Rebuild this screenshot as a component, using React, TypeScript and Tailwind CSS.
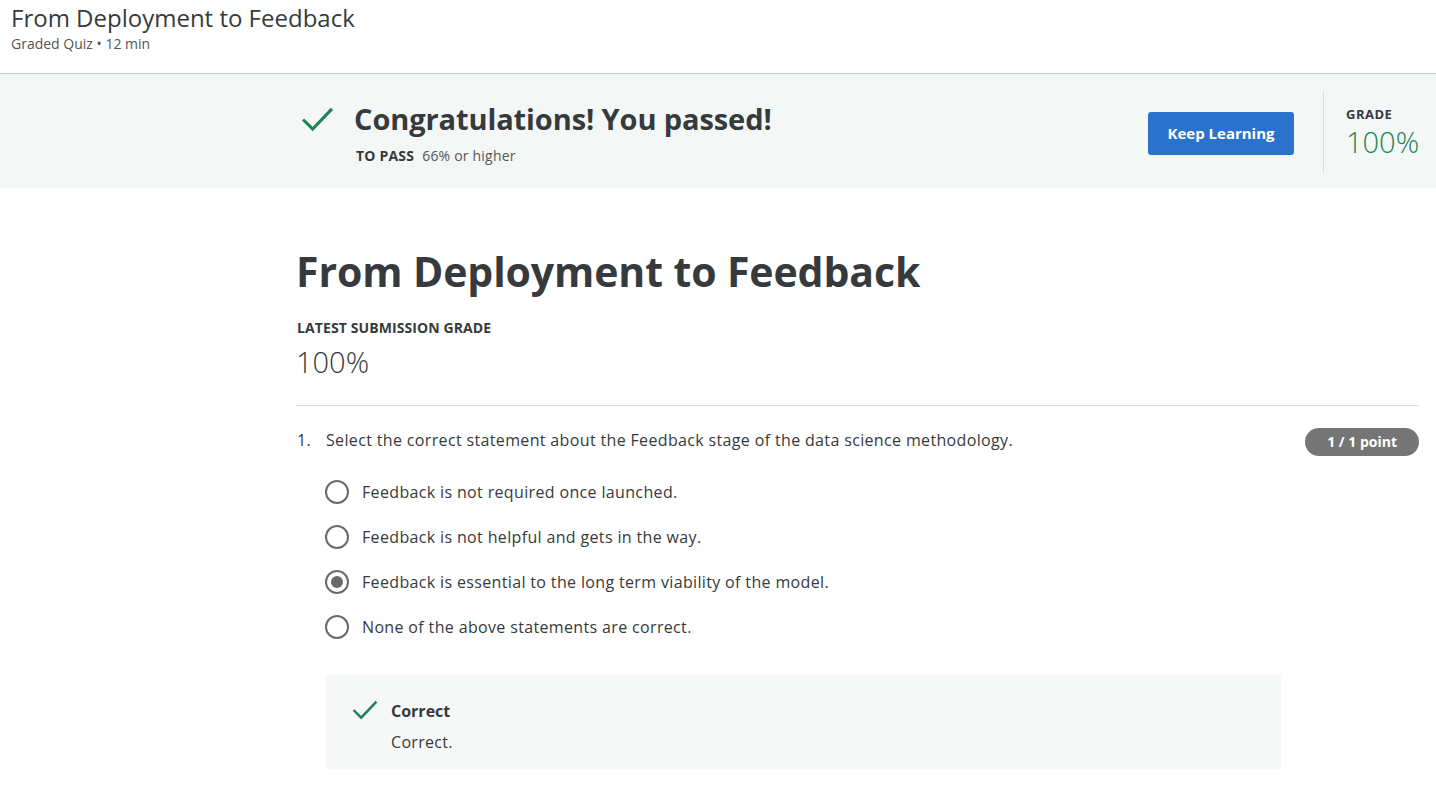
const options = [
  "Feedback is not required once launched.",
  "Feedback is not helpful and gets in the way.",
  "Feedback is essential to the long term viability of the model.",
  "None of the above statements are correct.",
];

const CheckMark = ({ className }: { className?: string }) => (
  <svg viewBox="0 0 34 26" className={className} fill="none">
    <path d="M2 13 L12 23 L32 2" stroke="#1f8354" strokeWidth="3.2" />
  </svg>
);

export default function App() {
  return (
    <div className="min-h-[806px] bg-white text-[#373a3c] font-['Open_Sans',sans-serif]">
      {/* header */}
      <div className="h-[74px] border-b border-[#c8c8c8] pl-[11px] pt-[2px]">
        <h1 className="text-[24px] leading-[32px] text-[#373a3c]">From Deployment to Feedback</h1>
        <div className="text-[14px] leading-[18px] text-[#555] mt-[1px]">Graded Quiz • 12 min</div>
      </div>

      {/* banner */}
      <div className="h-[114px] bg-[#f3f8f6] flex items-center pl-[301px] pr-[17px] pt-[5px]">
        <div className="flex flex-1 items-start -mt-[3px]">
          <CheckMark className="w-[33px] h-[25px] mt-[8px]" />
          <div className="ml-[20px]">
            <div className="text-[29px] font-bold leading-[40px] text-[#373a3c] tracking-[-0.1px]">Congratulations! You passed!</div>
            <div className="mt-[6px] flex items-baseline gap-[8px] pl-[2px]">
              <span className="text-[14px] font-bold leading-[20px] tracking-[0.2px]">TO PASS</span>
              <span className="text-[14px] text-[#555] tracking-[0.2px]">66% or higher</span>
            </div>
          </div>
        </div>
        <button className="w-[146px] h-[43px] rounded-[3px] bg-[#2a73cc] text-white text-[15px] font-bold">
          Keep Learning
        </button>
        <div className="ml-[29px] w-px h-[82px] bg-[#dcdcdc] -mt-[4px]" />
        <div className="ml-[22px] -mt-[2px] w-[73px]">
          <div className="text-[13px] font-bold tracking-[0.5px] leading-[18px]">GRADE</div>
          <div className="text-[29px] leading-[38px] font-light text-[#1f8354]">100%</div>
        </div>
      </div>

      {/* content */}
      <div className="ml-[296px] mr-[17px] pt-[56px]">
        <h2 className="text-[41px] font-bold leading-[54px] text-[#373a3c] tracking-[-0.1px]">From Deployment to Feedback</h2>
        <div className="mt-[21px] text-[14px] font-bold leading-[18px] pl-[1px] tracking-[0.1px]">LATEST SUBMISSION GRADE</div>
        <div className="mt-[6px] text-[29px] font-light leading-[38px]">100%</div>
        <div className="mt-[24px] h-px bg-[#dcdcdc]" />

        <div className="mt-[20px] flex items-start">
          <div className="flex-1 flex text-[16px] leading-[28px] tracking-[0.35px]">
            <span className="w-[30px] pl-[1px]">1.</span>
            <span>Select the correct statement about the Feedback stage of the data science methodology.</span>
          </div>
          <span className="mt-[2px] h-[28px] px-[22px] rounded-full bg-[#757575] text-white text-[14px] font-bold leading-[28px]">
            1 / 1 point
          </span>
        </div>

        <div className="ml-[29px] mt-[24px] flex flex-col gap-[21px]">
          {options.map((o, i) => (
            <div key={o} className="flex items-center h-[24px]">
              <span className="w-[24px] h-[24px] rounded-full border-2 border-[#6a6a6a] flex items-center justify-center">
                {i === 2 && <span className="w-[12px] h-[12px] rounded-full bg-[#6a6a6a]" />}
              </span>
              <span className="ml-[13px] text-[16px] leading-[24px] tracking-[0.35px]">{o}</span>
            </div>
          ))}
        </div>

        <div className="ml-[30px] mt-[36px] w-[955px] h-[94px] bg-[#f5f8f7] pl-[26px] pt-[24px] flex items-start">
          <CheckMark className="w-[26px] h-[20px] mt-[1px]" />
          <div className="ml-[13px]">
            <div className="text-[16px] font-bold leading-[24px]">Correct</div>
            <div className="mt-[9px] text-[16px] leading-[20px] tracking-[0.3px]">Correct.</div>
          </div>
        </div>
      </div>
    </div>
  );
}
